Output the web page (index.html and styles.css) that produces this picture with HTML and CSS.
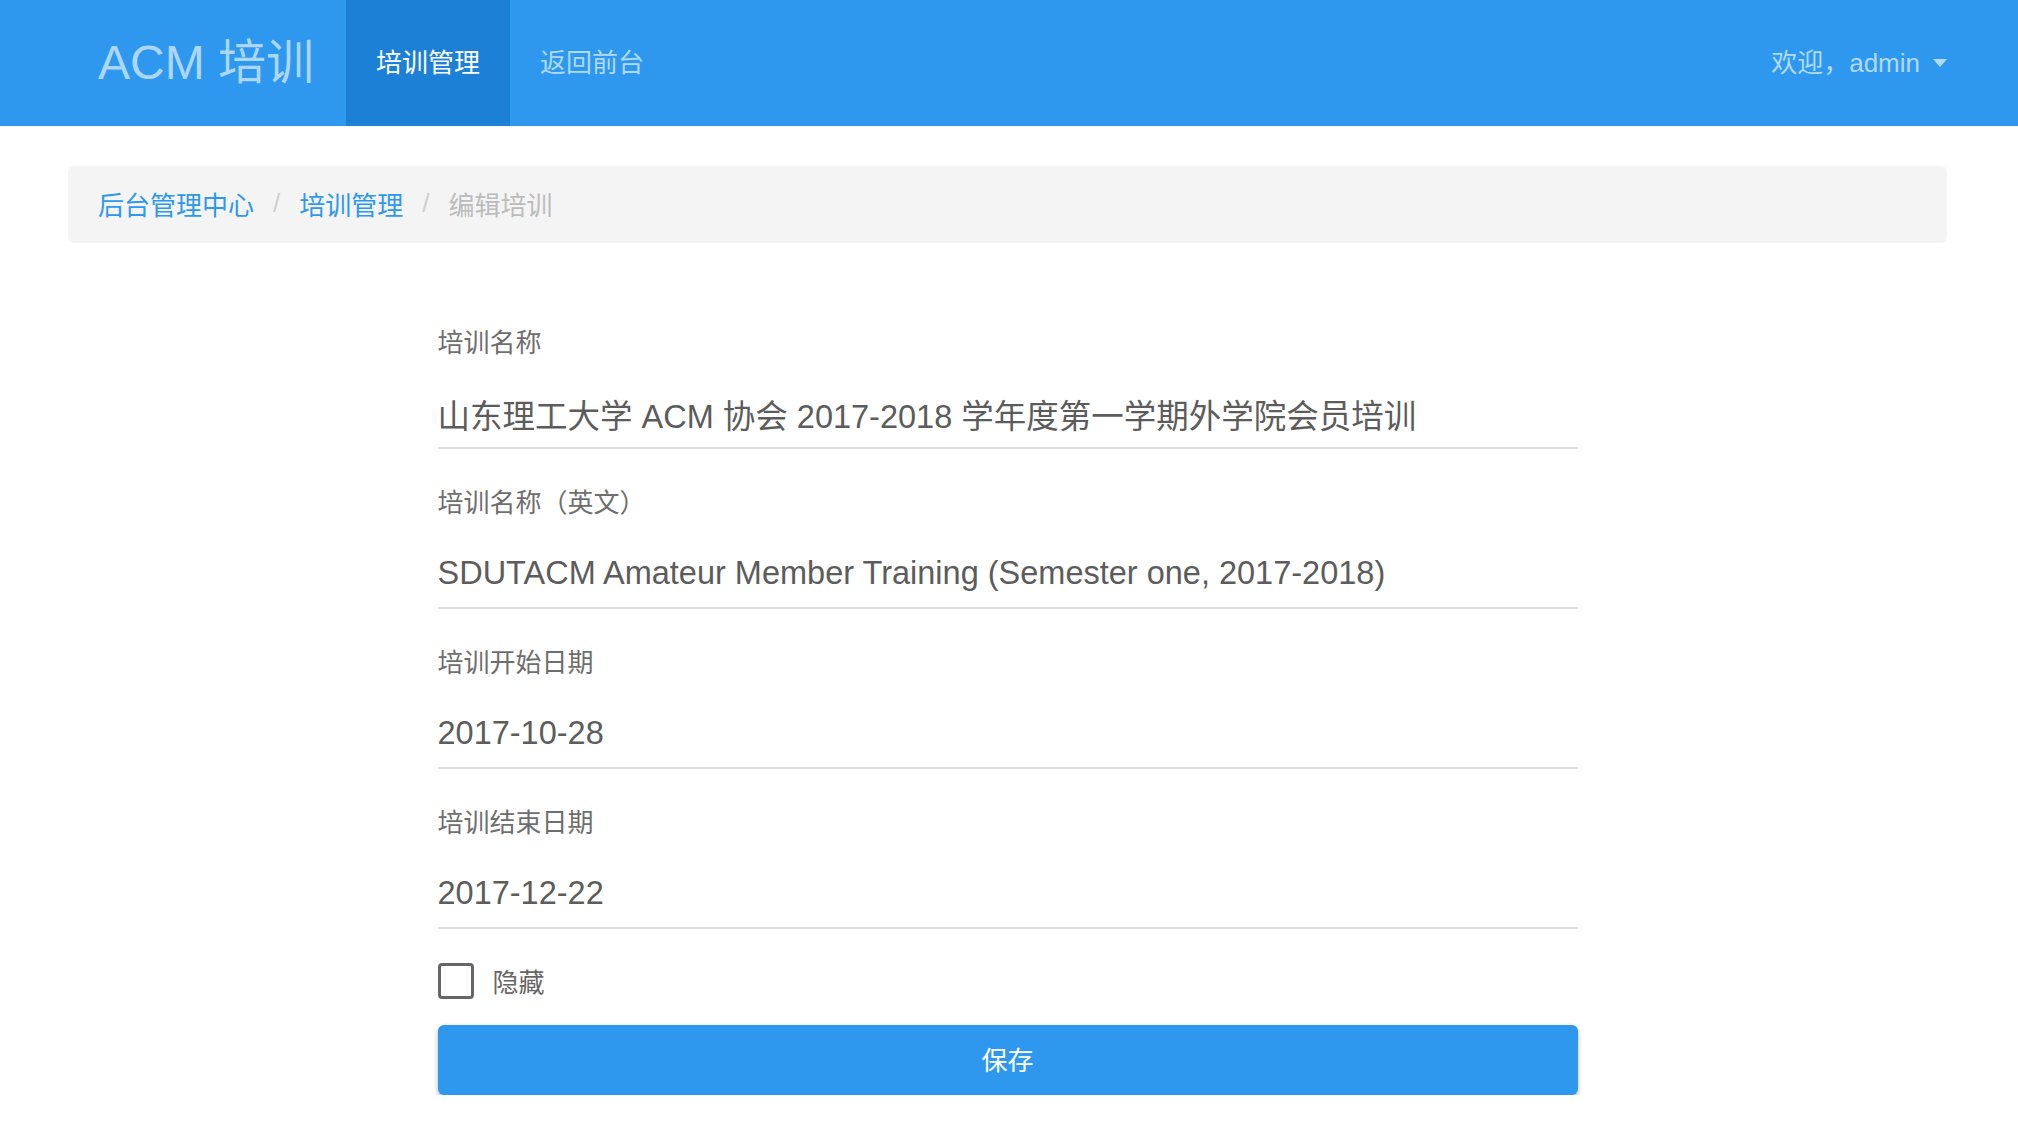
FILE: index.html
```html
<!DOCTYPE html>
<html lang="zh-CN">
<head>
<meta charset="utf-8">
<title>编辑培训</title>
<link rel="stylesheet" href="styles.css">
</head>
<body>
<nav class="navbar">
  <div class="navbar-inner">
    <a class="brand" href="#">ACM 培训</a>
    <ul class="nav">
      <li class="nav-item active"><a href="#">培训管理</a></li>
      <li class="nav-item"><a href="#">返回前台</a></li>
    </ul>
    <div class="nav-right">
      <a href="#" class="user">欢迎，admin<span class="caret"></span></a>
    </div>
  </div>
</nav>
<main class="container">
  <ol class="breadcrumb">
    <li><a href="#">后台管理中心</a></li>
    <li class="sep">/</li>
    <li><a href="#">培训管理</a></li>
    <li class="sep">/</li>
    <li class="current">编辑培训</li>
  </ol>
  <form class="edit-form">
    <div class="field">
      <label class="field-label">培训名称</label>
      <div class="field-input">山东理工大学 ACM 协会 2017-2018 学年度第一学期外学院会员培训</div>
    </div>
    <div class="field">
      <label class="field-label">培训名称（英文）</label>
      <div class="field-input">SDUTACM Amateur Member Training (Semester one, 2017-2018)</div>
    </div>
    <div class="field">
      <label class="field-label">培训开始日期</label>
      <div class="field-input">2017-10-28</div>
    </div>
    <div class="field field-last">
      <label class="field-label">培训结束日期</label>
      <div class="field-input">2017-12-22</div>
    </div>
    <div class="check-row">
      <span class="checkbox"></span>
      <span class="check-label">隐藏</span>
    </div>
    <div class="btn-save">保存</div>
  </form>
</main>
</body>
</html>
```

FILE: styles.css
```css
* { box-sizing: border-box; }
html, body {
  margin: 0;
  padding: 0;
  background: #fff;
}
body {
  font-family: "Liberation Sans", "Noto Sans CJK SC", sans-serif;
  color: #666;
}
a { text-decoration: none; }

.navbar {
  background: #2d98ee;
  height: 126px;
}
.navbar-inner {
  display: flex;
  align-items: stretch;
  height: 126px;
  padding: 0 71px 0 68px;
}
.brand {
  display: flex;
  align-items: center;
  padding: 0 32px 0 30px;
  font-size: 48px;
  color: #abd6f8;
  line-height: 1;
}
.nav {
  display: flex;
  list-style: none;
  margin: 0;
  padding: 0;
}
.nav-item a {
  display: flex;
  align-items: center;
  height: 126px;
  padding: 0 30px 5px;
  font-size: 26px;
  color: #b0d9fa;
}
.nav-item.active a {
  background: #1c80d6;
  color: #fff;
}
.nav-right {
  margin-left: auto;
  display: flex;
  align-items: center;
  padding-bottom: 5px;
}
.user {
  display: flex;
  align-items: center;
  font-size: 26px;
  color: #b0d9fa;
}
.caret {
  display: inline-block;
  width: 0;
  height: 0;
  margin-left: 13px;
  margin-top: 4px;
  border-top: 8px solid #b0d9fa;
  border-left: 7.5px solid transparent;
  border-right: 7.5px solid transparent;
}

.container {
  padding: 40px 71px 0 68px;
}
.breadcrumb {
  display: flex;
  align-items: center;
  list-style: none;
  margin: 0;
  height: 77px;
  padding: 0 30px 2px;
  background: #f4f4f4;
  border-radius: 6px;
  font-size: 26px;
}
.breadcrumb a { color: #2d98ee; }
.breadcrumb .sep {
  color: #cfcfcf;
  margin: 0 19px;
}
.breadcrumb .current { color: #bcbcbc; }

.edit-form {
  width: 1140px;
  margin: 84px auto 0;
}
.field {
  margin-bottom: 38px;
}
.field.field-last { margin-bottom: 0; }
.field-label {
  display: block;
  font-size: 26px;
  line-height: 32px;
  color: #6e6e6e;
}
.field-input {
  margin-top: 24px;
  height: 66px;
  display: flex;
  align-items: center;
  padding-bottom: 4px;
  font-size: 32.5px;
  color: #5c5c5c;
  border-bottom: 2px solid #dedede;
  white-space: nowrap;
}
.check-row {
  display: flex;
  align-items: center;
  margin-top: 34px;
  height: 36px;
}
.checkbox {
  width: 36px;
  height: 36px;
  border: 3.5px solid #666;
  border-radius: 4px;
}
.check-label {
  margin-left: 19px;
  padding-bottom: 1px;
  font-size: 26px;
  color: #666;
}
.btn-save {
  margin-top: 26px;
  height: 70px;
  display: flex;
  align-items: center;
  justify-content: center;
  padding-bottom: 3px;
  background: #2d98ee;
  color: #fff;
  font-size: 26px;
  border-radius: 6px;
  box-shadow: 0 2px 5px rgba(0, 0, 0, 0.3);
}
```
